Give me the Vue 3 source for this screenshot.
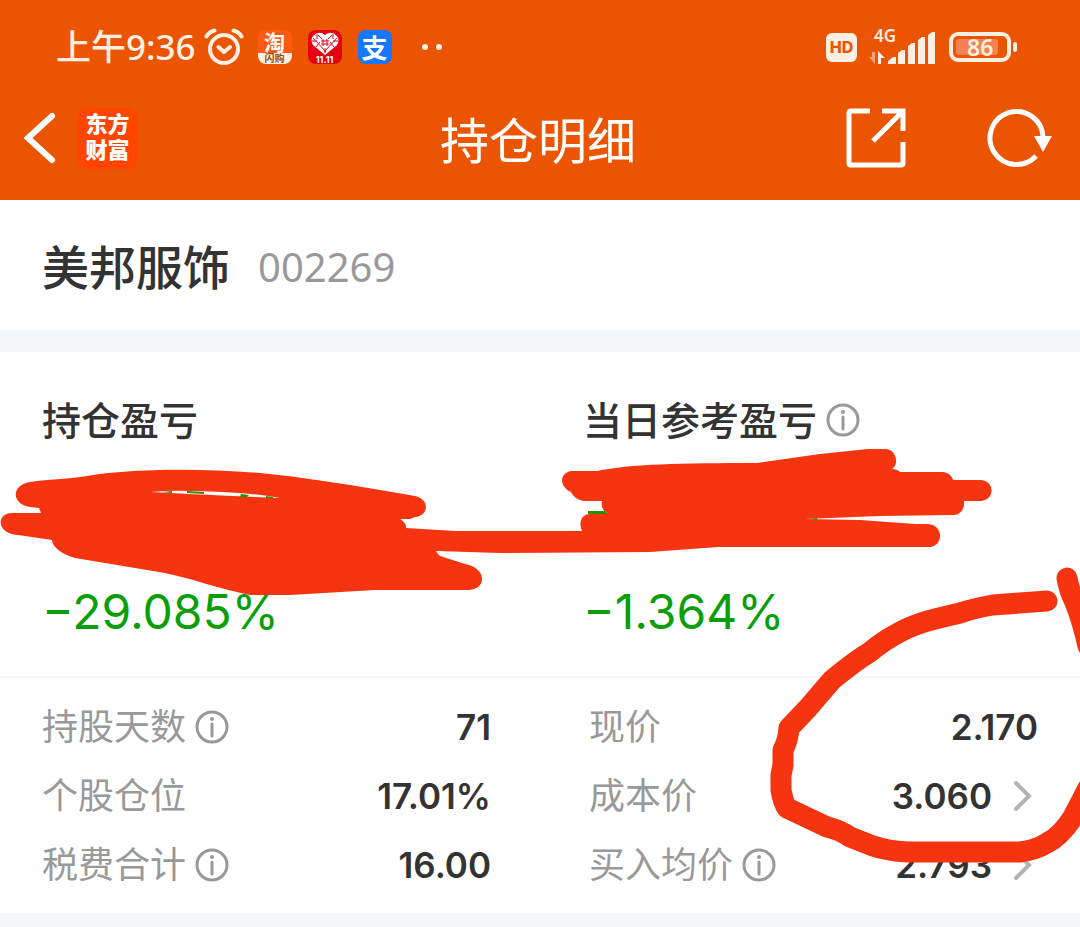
<template>
  <div class="page">
    <header class="header">
      <div class="status-bar">
        <div class="status-left">
          <span class="time">上午9:36</span>
          <svg class="alarm" viewBox="0 0 40 38" aria-hidden="true">
            <circle cx="20" cy="21" r="14" />
            <path d="M2.500 8.500Q5 4 10.500 2.500M29.500 2.500Q35 4 37.500 8.500M14.500 19l5.500 5 6-5" />
          </svg>
          <span class="app taobao"><b>淘</b><i>闪购</i></span>
          <span class="app huawei">
            <svg viewBox="0 0 34 25" aria-hidden="true">
              <path class="heart" d="M17 25L5 15Q2 10 5 6Q11 0 17 5Q23 0 29 6Q32 10 29 15Z" />
              <path class="lattice" d="M5 8l13 14M10 5l4 4M24 5l-4 4M29 8L16 22M4 11h5M25 11h5M9 4v5M25 4v5M8 17l4-5M26 17l-4-5M17 18v5" />
              <path class="knot" d="M13 11h8M13 14h8M15 9v7M19 9v7" />
            </svg>
            <i>11.11</i>
          </span>
          <span class="app alipay">支</span>
          <span class="dots"><i></i><i></i></span>
        </div>
        <div class="status-right">
          <span class="hd">HD</span>
          <span class="signal">
            <span class="net">4G</span>
            <svg viewBox="0 0 66 34" aria-hidden="true">
              <path class="faint" d="M6 22v12L0 27h3v-5z" />
              <path d="M9 34V21l7 7h-4v6zM19 34v-3l5-4h3v7zM29 34V23l4-3h3v14zM39 34V16l4-3h3v21zM49 34V10l4-3h3v27zM59 34V5l4-3h3v32z" />
            </svg>
          </span>
          <span class="battery"><span>86</span></span>
        </div>
      </div>
      <nav class="nav">
        <div class="nav-side">
          <button class="icon-btn" aria-label="返回">
            <svg class="back" viewBox="0 0 32 52"><path d="M28 4L4 26l24 22" /></svg>
          </button>
          <a class="logo" href="#"><span>东方</span><span>财富</span></a>
        </div>
        <h1>持仓明细</h1>
        <div class="nav-side nav-actions">
          <button class="icon-btn" aria-label="分享">
            <svg class="share" viewBox="0 0 60 60">
              <path d="M24 3H5Q3 3 3 5v50q0 2 2 2h50q2 0 2-2V34M36 3h21v20M56 4L27 33" />
            </svg>
          </button>
          <button class="icon-btn" aria-label="刷新">
            <svg class="refresh" viewBox="0 0 66 60">
              <path d="M50 48A26.500 26.500 0 1 1 57 29" />
              <path class="arrow" d="M48 28h18l-9 16z" />
            </svg>
          </button>
        </div>
      </nav>
    </header>

    <main>
      <section class="stock">
        <h2>美邦服饰</h2>
        <span class="code">002269</span>
      </section>

      <section class="card">
        <div class="summary">
          <div v-for="item in summary" :key="item.title">
            <h3>
              {{ item.title }}
              <button v-if="item.info" class="icon-btn" aria-label="说明">
                <svg class="info" viewBox="0 0 34 34"><circle cx="17" cy="17" r="15" /><path d="M17 14v12" /><circle class="dot" cx="17" cy="9" r="2" /></svg>
              </button>
            </h3>
            <p class="percent">{{ item.percent }}</p>
          </div>
        </div>
        <div class="details">
          <dl v-for="(col, i) in details" :key="i">
            <div v-for="row in col" :key="row.label" class="row">
              <dt>
                {{ row.label }}
                <button v-if="row.info" class="icon-btn" aria-label="说明">
                  <svg class="info" viewBox="0 0 34 34"><circle cx="17" cy="17" r="15" /><path d="M17 14v12" /><circle class="dot" cx="17" cy="9" r="2" /></svg>
                </button>
              </dt>
              <dd>
                {{ row.value }}
                <button v-if="row.more" class="icon-btn" aria-label="查看">
                  <svg class="chevron" viewBox="0 0 18 30"><path d="M2 2l13 13L2 28" /></svg>
                </button>
              </dd>
            </div>
          </dl>
        </div>
      </section>
    </main>

    <!-- 手绘涂抹与圈注 -->
    <svg class="marks" viewBox="0 0 1080 927" aria-hidden="true">
      <path
        class="blot"
        d="M30 482C50 479 66 479 80 477L100 474C140 469 200 468 260 473C300 477 340 483 380 490L415 496C430 499 429 516 415 517L410 519H400C404 521 407 526 406 528L455 531H582C578 522 582 514 590 514L607 513C602 510 601 505 602 501H584C577 500 573 496 571 492C558 486 560 472 572 471H597C630 464 680 463 757 463L820 454L868 449H886C897 450 899 465 892 469Q897 469 900 472H943C949 473 952 476 953 480H981C995 481 995 500 981 501H964C965 509 960 515 954 515L880 516L805 519L860 520L915 524H928C944 525 944 547 928 547H718L650 552L500 553L436 551Q438 555 440 556L465 564C487 568 487 589 469 590H375L290 595H250C220 589 190 578 165 573L75 558C58 553 52 545 52 540L18 535C-4 534 -4 513 12 513H41L39 508L30 507C11 504 11 485 30 482Z"
      />
      <path class="gap" d="M151 492Q172 490 192 491Q250 492 280 498Q230 496 151 492Z" />
      <path class="figure" d="M161 492l11-1v2zM187 491l17 1v2l-17-1zM241 494l8 1-2 2h-7zM266 496l7 1v1h-7zM588 511h17l2 3h-19zM810 519l7-1v2z" />
      <path
        class="stroke"
        d="M1047 601L993 605Q975 608 960 613L935 619Q915 624 900 632Q883 641 870 652Q855 661 832 680L808 708L789 728Q788 741 783 750V765L781 775V790Q783 802 787 808L827 827Q840 830 850 837L873 846Q888 851 907 852H1020Q1036 850 1047 843Q1061 836 1073 817L1088 788"
      />
      <path class="stroke" d="M1067 578Q1069 590 1074 600Q1082 619 1088 646" />
    </svg>
  </div>
</template>

<script setup>
const summary = [
  { title: '持仓盈亏', percent: '−29.085%' },
  { title: '当日参考盈亏', percent: '−1.364%', info: true }
];

const details = [
  [
    { label: '持股天数', value: '71', info: true },
    { label: '个股仓位', value: '17.01%' },
    { label: '税费合计', value: '16.00', info: true }
  ],
  [
    { label: '现价', value: '2.170' },
    { label: '成本价', value: '3.060', more: true },
    { label: '买入均价', value: '2.793', info: true, more: true }
  ]
];
</script>

<style>
body {
  margin: 0;
  background: #f6f7fa;
}
</style>

<style scoped>
.page {
  position: relative;
  overflow: hidden;
  min-height: 100vh;
  color: #333;
  font-family: "Noto Sans", "Noto Sans CJK SC", sans-serif;
}

h1, h2, h3, p, dl, dd {
  margin: 0;
}

svg {
  display: block;
  fill: none;
}

i {
  font-style: normal;
}

.icon-btn {
  padding: 0;
  border: 0;
  background: none;
}

.header {
  background: #eb5502;
  color: #fff;
}

.status-bar {
  display: flex;
  justify-content: space-between;
  height: 94px;
  padding: 0 69px 0 56px;
  color: #ffeee2;
}

.status-left,
.status-right {
  display: flex;
  align-items: center;
}

.time {
  font-size: 35px;
  font-weight: 500;
  line-height: 40px;
}

.alarm {
  width: 40px;
  height: 38px;
  margin: 0 14px 0 8px;
  stroke: #ffeee2;
  stroke-width: 4;
  stroke-linecap: round;
  stroke-linejoin: round;
}

.app {
  display: flex;
  flex-direction: column;
  align-items: center;
  width: 34px;
  height: 34px;
  margin-right: 16px;
  border-radius: 8px;
  color: #fff;
  font-family: "Noto Sans CJK SC", sans-serif;
}

.taobao {
  background: linear-gradient(#ff5a12 23px, #fff0df 23px);
}

.taobao b {
  font-size: 21px;
  line-height: 22px;
}

.taobao i {
  color: #8a4a20;
  font-size: 10px;
  font-weight: 700;
  line-height: 12px;
}

.huawei {
  background: #e60012;
}

.huawei svg {
  width: 34px;
  height: 25px;
}

.heart {
  fill: #fff;
}

.lattice,
.knot {
  stroke: #e60012;
}

.huawei i {
  font-family: Inter, sans-serif;
  font-size: 9px;
  font-weight: 700;
  line-height: 9px;
}

.alipay {
  background: #1677ff;
  font-size: 26px;
  font-weight: 700;
  line-height: 34px;
}

.dots {
  display: flex;
  gap: 8px;
  margin-left: 14px;
}

.dots i {
  width: 6px;
  height: 6px;
  border-radius: 50%;
  background: #ffeee2;
}

.hd {
  width: 31px;
  border-radius: 6px;
  background: #ffeee2;
  color: #eb5502;
  font-family: Inter, sans-serif;
  font-size: 16px;
  font-weight: 800;
  line-height: 29px;
  text-align: center;
}

.signal {
  position: relative;
  margin: 0 14px 0 12px;
}

.signal svg {
  width: 66px;
  height: 34px;
  fill: #ffeee2;
}

.signal .faint {
  fill: #f7a477;
}

.net {
  position: absolute;
  top: -3px;
  left: 5px;
  font-size: 17px;
  font-weight: 600;
  line-height: 18px;
}

.battery {
  position: relative;
  box-sizing: border-box;
  width: 62px;
  height: 30px;
  padding: 3px;
  border: 4px solid #ffeee2;
  border-radius: 9px;
}

.battery::after {
  position: absolute;
  top: 6px;
  right: -10px;
  width: 4px;
  height: 10px;
  border-radius: 2px;
  background: #ffeee2;
  content: "";
}

.battery span {
  display: block;
  width: 42px;
  border-radius: 3px;
  background: #f28350;
  font-size: 23px;
  font-weight: 600;
  line-height: 16px;
  text-indent: 11px;
}

.nav {
  display: flex;
  align-items: center;
  height: 106px;
  padding: 0 28px 18px 24px;
  box-sizing: border-box;
}

.nav-side {
  display: flex;
  flex: 1;
  align-items: center;
  gap: 21px;
}

.nav-actions {
  justify-content: flex-end;
  gap: 80px;
}

.nav h1 {
  padding-top: 4px;
  font-size: 49px;
  font-weight: 400;
  line-height: 56px;
}

.nav svg {
  stroke: #fff;
  stroke-width: 5;
}

.nav .back {
  width: 32px;
  height: 52px;
  stroke-width: 6;
  stroke-linecap: round;
}

.share {
  width: 60px;
  height: 60px;
}

.refresh {
  width: 66px;
  height: 60px;
}

.refresh .arrow {
  fill: #fff;
  stroke: none;
}

.logo {
  display: flex;
  flex-direction: column;
  align-items: center;
  justify-content: center;
  box-sizing: border-box;
  width: 61px;
  height: 61px;
  padding-bottom: 6px;
  border-radius: 12px;
  background: #ff4500;
  color: #fff;
  font-family: "Noto Sans CJK SC", sans-serif;
  font-size: 22px;
  font-weight: 800;
  line-height: 26px;
  text-decoration: none;
}

.stock {
  display: flex;
  align-items: center;
  gap: 28px;
  height: 130px;
  padding: 4px 42px 0;
  box-sizing: border-box;
  background: #fff;
}

.stock h2 {
  font-size: 47px;
  font-weight: 500;
  line-height: 56px;
}

.code {
  color: #999;
  font-size: 40px;
  line-height: 56px;
}

.card {
  margin-top: 22px;
  background: #fff;
}

.summary {
  display: grid;
  grid-template-columns: 1fr 1fr;
  gap: 86px;
  padding: 40px 42px 36px;
  border-bottom: 2px solid #f6f7fa;
}

.summary h3 {
  display: flex;
  align-items: center;
  gap: 9px;
  height: 56px;
  font-size: 39px;
  font-weight: 500;
  line-height: 56px;
}

.percent {
  margin-top: 136px;
  color: #0a9f0a;
  font-family: Inter, sans-serif;
  font-size: 48px;
  line-height: 56px;
  white-space: nowrap;
}

.info {
  width: 34px;
  height: 34px;
  stroke: #999;
  stroke-width: 3;
  stroke-linecap: round;
}

.info .dot {
  fill: #999;
  stroke: none;
}

.details {
  display: grid;
  grid-template-columns: 1fr 1fr;
  gap: 98px;
  padding: 14px 42px;
}

.row {
  display: flex;
  align-items: center;
  justify-content: space-between;
  height: 69px;
  font-size: 36px;
  line-height: 40px;
}

dt,
dd {
  display: flex;
  align-items: center;
  white-space: nowrap;
}

dt {
  gap: 9px;
  color: #999;
}

dd {
  gap: 22px;
  font-family: Inter, sans-serif;
  font-size: 35px;
  font-weight: 600;
}

.chevron {
  width: 18px;
  height: 30px;
  margin-right: 6px;
  stroke: #b3b3b3;
  stroke-width: 4;
  stroke-linecap: round;
}

.marks {
  position: absolute;
  top: 0;
  left: 0;
  width: 100%;
  pointer-events: none;
}

.blot {
  fill: #f63410;
}

.gap {
  fill: #fff;
}

.figure {
  fill: #259205;
}

.stroke {
  stroke: #f63410;
  stroke-width: 21;
  stroke-linecap: round;
  stroke-linejoin: round;
}
</style>
